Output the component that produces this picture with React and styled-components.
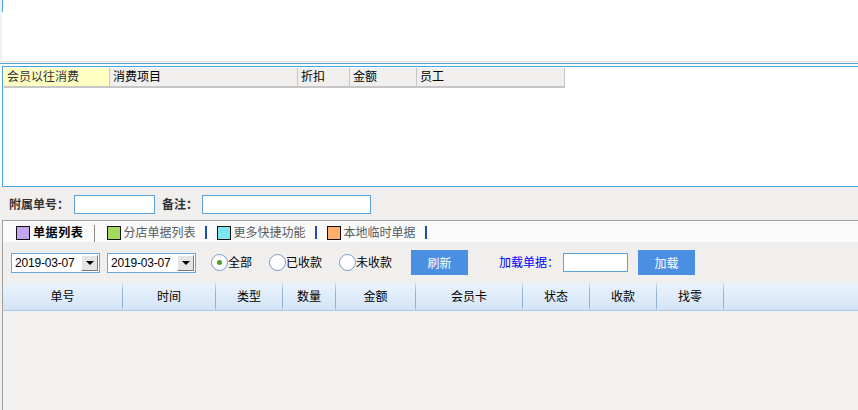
import styled, { createGlobalStyle } from "styled-components";

const GlobalStyle = createGlobalStyle`
  html, body {
    margin: 0;
    padding: 0;
    background: #f0efed;
  }
  body {
    font-family: "Liberation Sans", "Noto Sans CJK SC", sans-serif;
    font-size: 12px;
    color: #000;
  }
  * { box-sizing: border-box; }
`;

const Page = styled.div`
  width: 858px;
  height: 410px;
  overflow: hidden;
  display: flex;
  flex-direction: column;
`;

const TopArea = styled.div`
  background: #fff;
  height: 187px;
  flex: none;
`;

const TopPanel = styled.div`
  position: relative;
  height: 62px;
  border-left: 2px solid #f0f0f0;
  border-bottom: 1px solid #dcdcdc;

  &::before {
    content: "";
    position: absolute;
    left: 0;
    top: 0;
    width: 1px;
    height: 12px;
    background: #4ba3dd;
  }
`;

const BlueRule = styled.div`
  height: 1px;
  margin-top: 1px;
  background: #4ba3dd;
`;

const RecordsPanel = styled.div`
  height: 121px;
  margin: 2px 0 0 2px;
  border: 1px solid #4ba3dd;
  border-right: none;
  padding: 1px 0 0 1px;
`;

const RecordsHeader = styled.div`
  display: flex;
  width: 561px;
  height: 20px;
  border-bottom: 2px solid #c6c6c6;
`;

const RecordsCell = styled.div`
  flex: none;
  width: ${(p) => p.$w}px;
  padding-left: 3px;
  background: ${(p) => (p.$highlight ? "#ffffc4" : "#f0efed")};
  color: ${(p) => (p.$highlight ? "#333" : "#000")};
  border-right: 1px solid #c6c6c6;
  line-height: 19px;
  white-space: nowrap;
`;

const FormRow = styled.div`
  flex: none;
  display: flex;
  align-items: center;
  height: 33px;
  padding: 8px 0 6px 9px;
`;

const FieldLabel = styled.span`
  font-weight: bold;
  color: #333;
  line-height: 16px;
  margin-right: ${(p) => p.$gap}px;
  white-space: nowrap;
`;

const TextBox = styled.input`
  width: ${(p) => p.$w}px;
  height: 19px;
  margin: 0 ${(p) => p.$after || 0}px 0 ${(p) => p.$before || 0}px;
  padding: 0 2px;
  border: 1px solid #5aa3dc;
  background: #fff;
  outline: none;
`;

const ListArea = styled.div`
  flex: 1;
  min-height: 0;
  margin-left: 2px;
  border-top: 1px solid #a0a0a0;
  border-left: 1px solid #a0a0a0;
  display: flex;
  flex-direction: column;
`;

const TabStrip = styled.div`
  flex: none;
  display: flex;
  align-items: center;
  height: 21px;
  padding: 2px 0 0 13px;
  background: #fafafa;
`;

const Tab = styled.div`
  display: flex;
  align-items: center;
  gap: ${(p) => (p.$active ? 3 : 2)}px;
`;

const Swatch = styled.span`
  width: 14px;
  height: 14px;
  background: ${(p) => p.$color};
  border: 1px solid #111;
`;

const TabLabel = styled.span`
  line-height: 14px;
  white-space: nowrap;
  color: ${(p) => (p.$active ? "#000" : "#5a5a5a")};
  font-weight: ${(p) => (p.$active ? "bold" : "normal")};
  letter-spacing: ${(p) => (p.$active ? "0.6px" : "0")};
`;

const TabDivider = styled.span`
  width: ${(p) => (p.$first ? 1 : 2)}px;
  height: ${(p) => (p.$first ? 17 : 13)}px;
  margin: ${(p) => (p.$first ? "2px 12px 0 8px" : "0 10px 0 8px")};
  background: ${(p) => (p.$first ? "#8a8a8a" : "#1f4fb2")};
  align-self: ${(p) => (p.$first ? "stretch" : "center")};
`;

const Toolbar = styled.div`
  flex: none;
  display: flex;
  align-items: center;
  height: 41px;
  padding: 8px 0 8px 8px;
`;

const DatePicker = styled.div`
  display: flex;
  align-items: center;
  justify-content: space-between;
  width: 89px;
  height: 20px;
  padding: 0 1px 0 3px;
  background: #fff;
  border: 1px solid #6aa7da;

  & + & {
    margin-left: 7px;
  }
`;

const DateText = styled.span`
  line-height: 14px;
  letter-spacing: -0.2px;
`;

const DropButton = styled.span`
  display: flex;
  align-items: center;
  justify-content: center;
  width: 17px;
  height: 16px;
  background: #e4e4e4;
  border: 1px solid;
  border-color: #fff #7a7a7a #7a7a7a #fff;

  &::after {
    content: "";
    border-left: 4px solid transparent;
    border-right: 4px solid transparent;
    border-top: 4px solid #000;
    margin-top: 1px;
  }
`;

const RadioGroup = styled.div`
  display: flex;
  gap: 17px;
  margin-left: 15px;
`;

const RadioOption = styled.label`
  display: flex;
  align-items: center;
  line-height: 14px;
  white-space: nowrap;
`;

const RadioCircle = styled.span`
  display: flex;
  align-items: center;
  justify-content: center;
  width: 17px;
  height: 17px;
  border-radius: 50%;
  border: 1px solid #7f9cc6;
  background: radial-gradient(circle at 50% 40%, #ffffff 55%, #eaf0f8 100%);

  &::after {
    content: "";
    width: 5px;
    height: 5px;
    border-radius: 50%;
    background: ${(p) => (p.$checked ? "#46a01e" : "transparent")};
  }
`;

const ActionButton = styled.button`
  width: 57px;
  height: 25px;
  margin-left: ${(p) => p.$ml}px;
  padding: 0;
  border: none;
  background: #4a8fe2;
  color: #fff;
  font-family: "Noto Sans CJK SC", sans-serif;
  font-size: 12px;
  line-height: 14px;
`;

const LoadLabel = styled.span`
  margin-left: 31px;
  color: #0000ff;
  line-height: 14px;
  white-space: nowrap;
`;

const GridHeader = styled.div`
  flex: none;
  display: flex;
  height: 28px;
  background: linear-gradient(#eaf3fc, #d3e4f6);
  border-bottom: 1px solid #aecbe8;
`;

const GridHeadCell = styled.div`
  flex: none;
  display: flex;
  align-items: center;
  justify-content: center;
  width: ${(p) => p.$w}px;
  border-right: 1px solid #8fb3d6;
  border-image: linear-gradient(to bottom, #dbe8f6, #8fb3d6 35%, #8fb3d6 85%, #c4d9ef) 1;
  line-height: 14px;
  white-space: nowrap;
`;

const GridBody = styled.div`
  flex: 1;
  background: #f2f1ef;
`;

const recordColumns = [
  { title: "会员以往消费", w: 106, highlight: true },
  { title: "消费项目", w: 188 },
  { title: "折扣", w: 52 },
  { title: "金额", w: 67 },
  { title: "员工", w: 148 },
];

const tabs = [
  { title: "单据列表", color: "#c3a5ef", active: true },
  { title: "分店单据列表", color: "#a3d95c" },
  { title: "更多快捷功能", color: "#7fe5f0" },
  { title: "本地临时单据", color: "#ffae6e" },
];

const gridColumns = [
  { title: "单号", w: 120 },
  { title: "时间", w: 93 },
  { title: "类型", w: 67 },
  { title: "数量", w: 53 },
  { title: "金额", w: 80 },
  { title: "会员卡", w: 107 },
  { title: "状态", w: 67 },
  { title: "收款", w: 67 },
  { title: "找零", w: 67 },
];

const radios = [
  { title: "全部", checked: true },
  { title: "已收款" },
  { title: "未收款" },
];

export default function App() {
  return (
    <Page>
      <GlobalStyle />
      <TopArea>
        <TopPanel />
        <BlueRule />
        <RecordsPanel>
          <RecordsHeader>
            {recordColumns.map((c) => (
              <RecordsCell key={c.title} $w={c.w} $highlight={c.highlight}>
                {c.title}
              </RecordsCell>
            ))}
          </RecordsHeader>
        </RecordsPanel>
      </TopArea>

      <FormRow>
        <FieldLabel $gap={5}>附属单号：</FieldLabel>
        <TextBox $w={81} $after={7} />
        <FieldLabel $gap={4}>备注：</FieldLabel>
        <TextBox $w={169} />
      </FormRow>

      <ListArea>
        <TabStrip>
          {tabs.map((t, i) => (
            <Tab key={t.title} $active={t.active}>
              <Swatch $color={t.color} />
              <TabLabel $active={t.active}>{t.title}</TabLabel>
              <TabDivider $first={i === 0} />
            </Tab>
          ))}
        </TabStrip>

        <Toolbar>
          <DatePicker>
            <DateText>2019-03-07</DateText>
            <DropButton />
          </DatePicker>
          <DatePicker>
            <DateText>2019-03-07</DateText>
            <DropButton />
          </DatePicker>
          <RadioGroup>
            {radios.map((r) => (
              <RadioOption key={r.title}>
                <RadioCircle $checked={r.checked} />
                {r.title}
              </RadioOption>
            ))}
          </RadioGroup>
          <ActionButton $ml={19}>刷新</ActionButton>
          <LoadLabel>加载单据：</LoadLabel>
          <TextBox $w={65} $before={4} />
          <ActionButton $ml={10}>加载</ActionButton>
        </Toolbar>

        <GridHeader>
          {gridColumns.map((c) => (
            <GridHeadCell key={c.title} $w={c.w}>
              {c.title}
            </GridHeadCell>
          ))}
        </GridHeader>
        <GridBody />
      </ListArea>
    </Page>
  );
}
